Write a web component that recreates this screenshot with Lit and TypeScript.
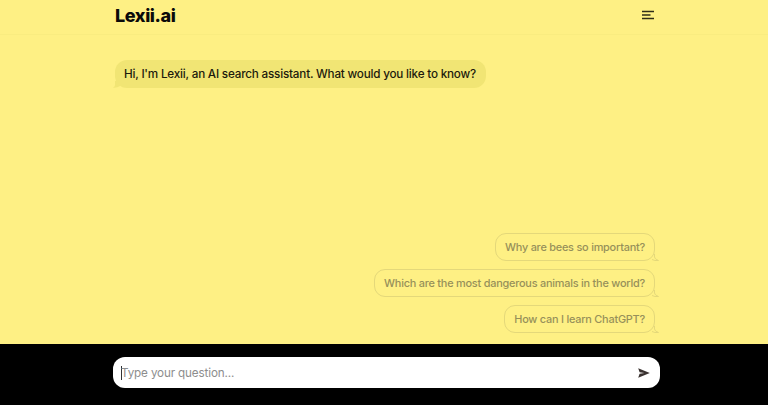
import { LitElement, html, css } from "lit";
import { customElement } from "lit/decorators.js";

@customElement("app-root")
export class AppRoot extends LitElement {
  static styles = css`
    :host {
      display: flex;
      flex-direction: column;
      width: 768px;
      height: 405px;
      overflow: hidden;
      background: #fef084;
      font-family: Inter, "Noto Sans", sans-serif;
      color: #111;
    }
    .top {
      flex: none;
      box-sizing: border-box;
      height: 35px;
      border-bottom: 1px solid #f9ec80;
      display: flex;
      align-items: center;
      justify-content: space-between;
      padding: 0 113px 4px 115px;
    }
    .logo {
      font-size: 18px;
      font-weight: 800;
      color: #0a0a0a;
      letter-spacing: -0.4px;
    }
    .menu {
      display: block;
      width: 14px;
      height: 12px;
    }
    .main {
      flex: 1;
      min-height: 0;
      display: flex;
      flex-direction: column;
      justify-content: space-between;
      padding: 25px 113px 0 115px;
    }
    .bubble {
      position: relative;
      font-weight: 500;
      line-height: 20px;
      white-space: nowrap;
    }
    .intro {
      align-self: flex-start;
      background: #f1e574;
      border-radius: 12px;
      padding: 4px 10px 4px 9px;
      color: #1c1a0c;
      font-size: 11.7px;
      letter-spacing: -0.2px;
      height: 20px;
    }
    .intro-tail {
      position: absolute;
      left: -2px;
      bottom: 0;
      width: 10px;
      height: 7px;
      display: block;
    }
    .list {
      display: flex;
      flex-direction: column;
      align-items: flex-end;
      gap: 8px;
      padding-bottom: 11px;
    }
    .ask {
      box-sizing: border-box;
      height: 28px;
      padding: 3px 9px;
      border: 1px solid #e4d87a;
      border-radius: 11px;
      color: #97905a;
      font-size: 10.9px;
      letter-spacing: -0.22px;
    }
    .ask-tail {
      position: absolute;
      right: -5px;
      bottom: -1px;
      width: 10px;
      height: 7px;
      display: block;
    }
    .foot {
      flex: none;
      height: 61px;
      background: #000;
      box-sizing: border-box;
      padding: 13px 108px 17px 113px;
    }
    .field {
      height: 31px;
      background: #fff;
      border-radius: 12px;
      display: flex;
      align-items: center;
      justify-content: space-between;
      padding: 0 10px 0 8px;
    }
    .hint {
      display: flex;
      align-items: center;
      font-size: 11.7px;
      letter-spacing: -0.15px;
      color: #8d8d8d;
    }
    .caret {
      width: 1px;
      height: 14px;
      margin-right: -1px;
      background: #333;
    }
    .send {
      display: block;
      width: 12px;
      height: 10px;
    }
  `;

  render() {
    const asks = [
      "Why are bees so important?",
      "Which are the most dangerous animals in the world?",
      "How can I learn ChatGPT?",
    ];
    return html`
      <header class="top">
        <div class="logo">Lexii.ai</div>
        <svg class="menu" viewBox="0 0 14 12" fill="none" stroke="#2e2c18" stroke-width="1.3">
          <path d="M1 2.5H13M1 6H9.5M1 9.5H13" />
        </svg>
      </header>
      <main class="main">
        <div class="bubble intro">
          Hi, I'm Lexii, an AI search assistant. What would you like to know?
          <svg class="intro-tail" viewBox="0 0 10 7"><path d="M2 0V4Q2 5.5 0 6.6Q4 7 7 5V0Z" fill="#f1e574" /></svg>
        </div>
        <div class="list">
          ${asks.map(
            (q) => html`<div class="bubble ask">
              ${q}
              <svg class="ask-tail" viewBox="0 0 10 7" fill="none">
                <path d="M5.5 0V3Q5.5 5 9.5 6.5Q5.5 7 3 5.5" stroke="#e4d87a" />
              </svg>
            </div>`
          )}
        </div>
      </main>
      <footer class="foot">
        <div class="field">
          <div class="hint"><span class="caret"></span>Type your question...</div>
          <svg class="send" viewBox="0 0 12 10"><path d="M0.2 0.2L11.8 5L0.2 9.8L1.6 5.7L6.5 5L1.6 4.3Z" fill="#3a3230" /></svg>
        </div>
      </footer>
    `;
  }
}
